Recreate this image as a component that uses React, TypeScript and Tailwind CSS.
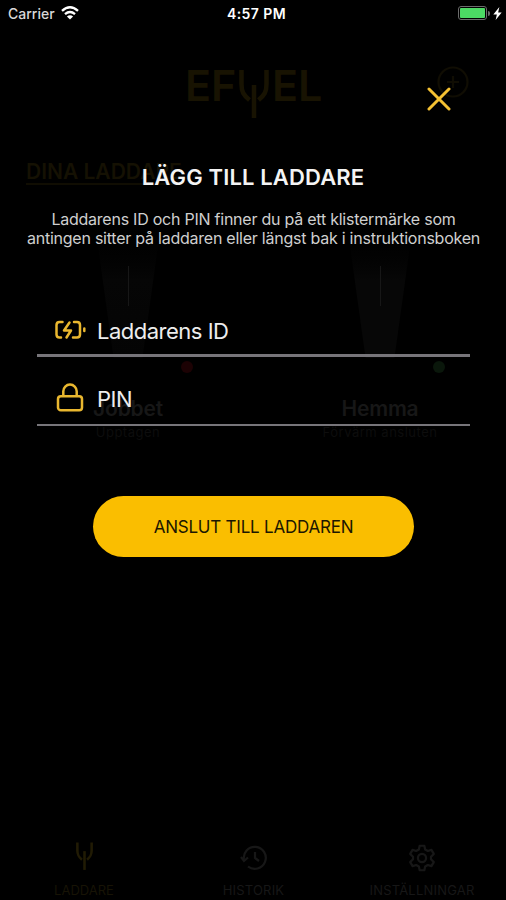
import type React from "react"

const ForkIcon: React.FC<{ className?: string }> = ({ className }) => (
  <svg viewBox="0 0 30 50" fill="none" stroke="currentColor" strokeWidth={4.5} className={className}>
    <path d="M2.5 1v14c0 8 2 11 8 16" />
    <path d="M27.5 1v14c0 8-2 11-8 16" />
    <path d="M15 16v33" />
  </svg>
)

const PlusCircleIcon = () => (
  <svg viewBox="0 0 32 32" fill="none" stroke="currentColor" strokeWidth={2.2} className="h-8 w-8">
    <circle cx="16" cy="16" r="14.5" />
    <path d="M16 10v12M10 16h12" />
  </svg>
)

const HistoryIcon = () => (
  <svg viewBox="0 0 28 26" fill="none" stroke="currentColor" strokeWidth={2.2} className="h-[26px] w-7">
    <path d="M4 15A11 11 0 1 1 8 21.5" />
    <path d="M1 12l3 4 4-3.5M15 7v6l4 3" />
  </svg>
)

const GearIcon = () => (
  <svg
    viewBox="0 0 24 24"
    fill="none"
    stroke="currentColor"
    strokeWidth={1.9}
    strokeLinejoin="round"
    className="h-7 w-7"
  >
    <path d="M10 1.5h4l.7 3.2 2.3 1.3 3.1-1 2 3.500L19.700 11v2l2.400 2.500-2 3.500-3.100-1-2.300 1.300L14 22.500h-4l-.7-3.200L7 18l-3.100 1-2-3.500L4.300 13v-2L1.900 8.500l2-3.500L7 6l2.300-1.300z" />
    <circle cx="12" cy="12" r="3.5" />
  </svg>
)

const BatteryIcon = () => (
  <svg
    viewBox="0 0 32 20"
    fill="none"
    stroke="currentColor"
    strokeWidth={2.5}
    strokeLinecap="round"
    strokeLinejoin="round"
    className="h-5 w-8"
  >
    <path d="M8.5 2H5.5Q2.5 2 2.5 5v9.500q0 3 3 3h1.500" />
    <path d="M20 2h3q3 0 3 3v9.500q0 3-3 3h-4" />
    <path d="M15.500 2.500l-5.500 8h7l-4.500 7" />
    <path d="M30.300 8.500v2.500" />
  </svg>
)

const LockIcon = () => (
  <svg viewBox="0 0 28 30" fill="none" stroke="currentColor" strokeWidth={2.5} className="h-[30px] w-7">
    <rect x="2" y="13.2" width="24" height="14" rx="2.8" />
    <path d="M7.300 13V8.300a6.700 6.700 0 0 1 13.400 0V13" />
  </svg>
)

const StatusBar = () => (
  <div className="flex h-7 items-center justify-between pb-[2px] pl-2 pr-1 text-white">
    <div className="flex w-[120px] items-center gap-[6px]">
      <span className="text-[14px] font-medium text-[#d8d8d8]">Carrier</span>
      <svg viewBox="0 0 18 14" fill="none" stroke="currentColor" strokeWidth={2.4} className="h-[14px] w-[18px]">
        <path d="M1 4.800q8-7 16 0M4 8.200q5-4.200 10 0" />
        <path d="M9 13.500L5.900 10.400q3.100-2.400 6.200 0z" fill="currentColor" stroke="none" />
      </svg>
    </div>
    <span className="ml-[3px] text-[14px] font-semibold tracking-[0.4px]">4:57 PM</span>
    <div className="flex w-[120px] items-center justify-end">
      <div className="h-[14px] w-[29px] rounded-[3px] border border-[#6b6b6b] p-px">
        <div className="h-full rounded-[1px] bg-[#4cd964]" />
      </div>
      <div className="ml-px h-[5px] w-[2px] rounded-r bg-[#6b6b6b]" />
      <svg viewBox="0 0 9 14" fill="currentColor" className="ml-[3px] h-[13px] w-[9px]">
        <path d="M6.500 0L0 8h3.800L2.500 14 9 5.800H5.200z" />
      </svg>
    </div>
  </div>
)

interface ChargerProps {
  name: string
  status: string
  dot: string
  beam: string
}

const Charger: React.FC<ChargerProps> = ({ name, status, dot, beam }) => (
  <div className="flex w-[253px] flex-col items-center">
    <div
      className={`flex h-[155px] w-[72px] justify-center bg-gradient-to-b from-black pt-[63px] [clip-path:polygon(0_0,100%_0,70%_100%,30%_100%)] ${beam}`}
    >
      <div className="h-10 w-px bg-[#171717]" />
    </div>
    <div className={`ml-[118px] mt-[3px] h-3 w-3 rounded-full ${dot}`} />
    <p className="mt-[22px] text-[21px] font-semibold leading-7 tracking-[-0.2px] text-[#171717]">{name}</p>
    <p className="text-[13px] leading-[18px] tracking-[0.5px] text-[#0d0d0d]">{status}</p>
  </div>
)

const ChargersScreen = () => (
  <div className="flex h-[872px] flex-col">
    <div className="flex h-[104px] items-start justify-between pl-[185px] pr-[37px] pt-[38px] text-[#181302]">
      <div className="flex items-start">
        <span className="w-[54px] text-[43px] font-semibold leading-[38px]">EF</span>
        <ForkIcon className="mt-[3px] h-[50px] w-[30px]" />
        <span className="ml-[3px] text-[43px] font-semibold leading-[38px]">EL</span>
      </div>
      <div className="text-[#100d03]">
        <PlusCircleIcon />
      </div>
    </div>
    <div className="flex pl-[26px] pt-[26px]">
      <p className="h-[27px] w-[152px] whitespace-nowrap border-b-2 border-[#100d02] text-[21px] font-semibold leading-7 text-[#151103]">
        DINA LADDARE
      </p>
    </div>
    <div className="mt-[18px] flex pl-[2px]">
      <Charger name="Jobbet" status="Upptagen" dot="bg-[#1c0204]" beam="via-[#060606] to-[#040404]" />
      <Charger name="Hemma" status="Förvärm ansluten" dot="bg-[#0a170b]" beam="via-[#070707] to-[#070707]" />
    </div>
    <div className="mt-auto flex h-[60px] justify-between pl-[53px] pr-[30px] text-[13px] text-[#171717]">
      <div className="flex w-[62px] flex-col items-center">
        <ForkIcon className="mt-0.5 h-[29px] w-[19px] text-[#211b04]" />
        <span className="mt-[10px] whitespace-nowrap text-[13px] text-[#171305]">LADDARE</span>
      </div>
      <div className="ml-[24px] flex w-[68px] flex-col items-center">
        <div className="mt-[5px]">
          <HistoryIcon />
        </div>
        <span className="mt-[10px] tracking-[0.2px]">HISTORIK</span>
      </div>
      <div className="flex w-[108px] flex-col items-center">
        <div className="mt-1">
          <GearIcon />
        </div>
        <span className="mt-[9px] whitespace-nowrap tracking-[0.2px]">INSTÄLLNINGAR</span>
      </div>
    </div>
  </div>
)

interface FieldProps {
  icon: React.ReactNode
  label: string
  line: string
}

const Field: React.FC<FieldProps> = ({ icon, label, line }) => (
  <div className={`flex items-center border-[#77757a] ${line}`}>
    <div className="ml-4 flex w-[33px] justify-center text-[#e9b72f]">{icon}</div>
    <span className="ml-[11px] mt-[3px] text-[22px] tracking-[-0.5px] text-[#ededed]">{label}</span>
  </div>
)

const AddChargerDialog = () => (
  <div className="absolute inset-x-0 top-7 flex h-[872px] flex-col">
    <div className="flex h-[84px] justify-end pr-[55px] pt-[59px]">
      <svg
        viewBox="0 0 24 24"
        fill="none"
        stroke="currentColor"
        strokeWidth={3}
        strokeLinecap="round"
        className="h-6 w-6 text-[#f5c132]"
      >
        <path d="M2 2l20 20M22 2L2 22" />
      </svg>
    </div>
    <h1 className="mt-[50px] text-center text-[22px] font-semibold leading-[30px] tracking-[0.15px] text-[#f4f4f4]">
      LÄGG TILL LADDARE
    </h1>
    <p className="mt-[18px] whitespace-nowrap pl-px text-center text-[16px] leading-[19px] tracking-[-0.24px] text-[#cfcfcf]">
      Laddarens ID och PIN finner du på ett klistermärke som
      <br />
      antingen sitter på laddaren eller längst bak i instruktionsboken
    </p>
    <div className="ml-[37px] mt-[57px] w-[433px]">
      <Field icon={<BatteryIcon />} label="Laddarens ID" line="h-[52px] border-b-[3px]" />
      <Field icon={<LockIcon />} label="PIN" line="mt-[14px] h-[55px] border-b-2 pt-px" />
    </div>
    <button className="ml-[93px] mt-[70px] h-[61px] w-[321px] rounded-full bg-[#fabe00] pt-[2px] text-[17px] tracking-[-0.22px] text-[#1c1700]">
      ANSLUT TILL LADDAREN
    </button>
  </div>
)

export default function App() {
  return (
    <div className="relative h-[900px] w-[506px] overflow-hidden bg-black font-['Inter',sans-serif]">
      <StatusBar />
      <ChargersScreen />
      <AddChargerDialog />
    </div>
  )
}
